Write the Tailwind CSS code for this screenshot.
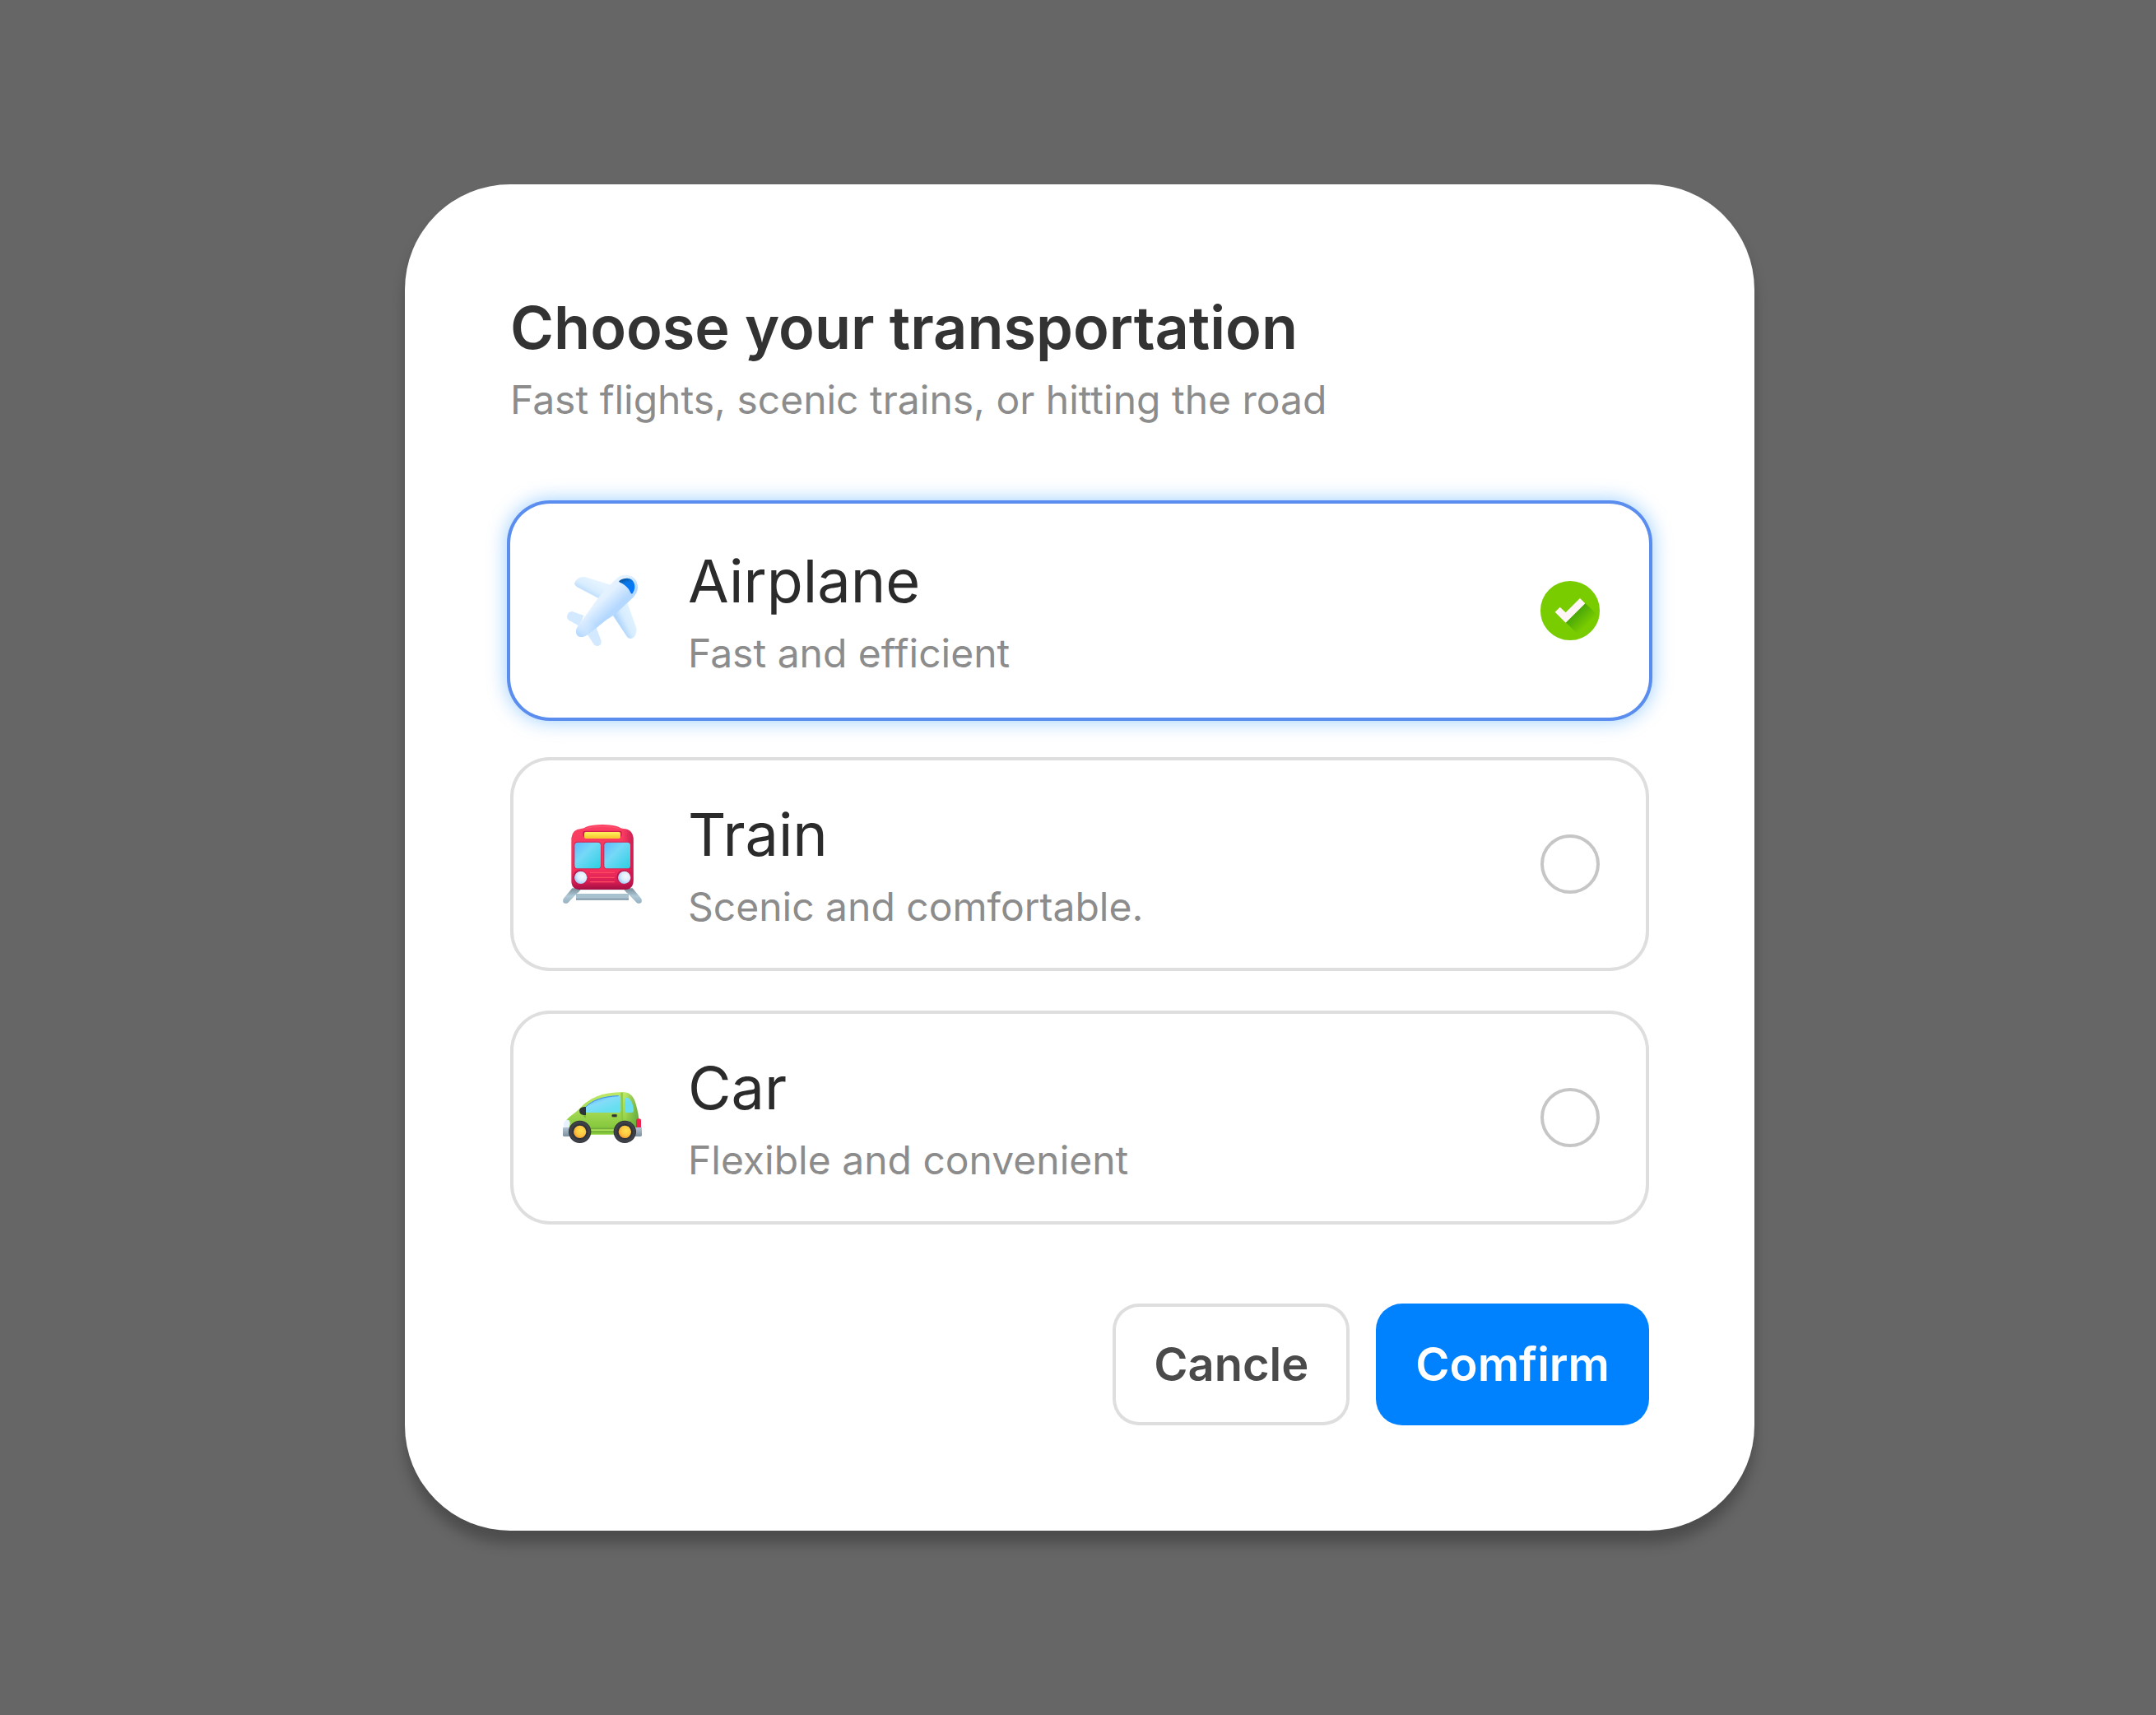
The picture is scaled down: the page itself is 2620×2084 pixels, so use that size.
<!DOCTYPE html>
<html lang="en">
<head>
    <meta charset="UTF-8">
    <meta name="viewport" content="width=device-width, initial-scale=1.0">
    <title>Choose your transportation</title>
    <script src="https://cdn.jsdelivr.net/npm/@tailwindcss/browser@4"></script>
</head>
<body class="flex min-h-screen items-center justify-center bg-[#666666] pl-1 font-['Inter',sans-serif] [font-optical-sizing:none]">
    <form class="w-full max-w-[1640px] rounded-[128px] bg-white p-32 shadow-[0_16px_16px_rgba(0,0,0,0.25)]">
        <header class="flex flex-col gap-3">
            <h1 id="form-title" class="text-[72px] leading-[92px] font-semibold text-[#333333]">Choose your transportation</h1>
            <p class="text-[48px] leading-[60px] text-[#8c8c8c]">Fast flights, scenic trains, or hitting the road</p>
        </header>

        <fieldset class="mt-24 flex flex-col gap-12" aria-labelledby="form-title">
            <!-- Airplane -->
            <label for="airplane" class="flex items-center gap-14 rounded-[48px] py-12 pr-15 pl-16 shadow-[0_0_0_4px_#5b8def,0_0_24px_4px_rgba(0,132,255,0.4)]">
                <svg class="size-24 shrink-0" viewBox="42 42 288 288" aria-hidden="true">
                    <defs>
                        <linearGradient id="plane-body" x1="145" y1="120" x2="215" y2="195" gradientUnits="userSpaceOnUse">
                            <stop offset="0" stop-color="#e6f4ff"/>
                            <stop offset="0.45" stop-color="#e3f1ff"/>
                            <stop offset="1" stop-color="#b4d8ff"/>
                        </linearGradient>
                        <linearGradient id="plane-tail" x1="95" y1="285" x2="150" y2="225" gradientUnits="userSpaceOnUse">
                            <stop offset="0" stop-color="#a9d2ff"/>
                            <stop offset="0.5" stop-color="#d6eaff" stop-opacity="0.5"/>
                            <stop offset="1" stop-color="#e3f1ff" stop-opacity="0"/>
                        </linearGradient>
                        <linearGradient id="plane-wing-l" x1="150" y1="75" x2="125" y2="120" gradientUnits="userSpaceOnUse">
                            <stop offset="0" stop-color="#e4f3ff"/>
                            <stop offset="0.55" stop-color="#d9edff"/>
                            <stop offset="1" stop-color="#bcdcfc"/>
                        </linearGradient>
                        <linearGradient id="plane-wing-r" x1="300" y1="205" x2="248" y2="230" gradientUnits="userSpaceOnUse">
                            <stop offset="0" stop-color="#e2f3ff"/>
                            <stop offset="0.6" stop-color="#d6ecff"/>
                            <stop offset="1" stop-color="#b3d7fb"/>
                        </linearGradient>
                        <linearGradient id="plane-window" x1="265" y1="68" x2="285" y2="120" gradientUnits="userSpaceOnUse">
                            <stop offset="0" stop-color="#07539f"/>
                            <stop offset="0.35" stop-color="#0a78e6"/>
                            <stop offset="1" stop-color="#0077ff"/>
                        </linearGradient>
                    </defs>
                    <path fill="url(#plane-wing-l)" d="M84 87C90 70 103 62 122 63L216 92L182 146L94 100Q84 94 84 87Z"/>
                    <path fill="url(#plane-wing-r)" d="M276 154L310 250C312 270 303 288 288 288Q281 288 276 281L224 203Z"/>
                    <path fill="#d3e9ff" d="M57 208Q60 189 76 189L118 204L102 242L64 221Q57 216 57 208Z"/>
                    <path fill="#d3e9ff" d="M164 248L182 297Q183 315 166 315Q159 315 155 309L131 272Z"/>
                    <path fill="url(#plane-body)" d="M237 70C258 50 295 53 308 75C320 97 316 120 299 137C270 164 235 200 205 217C175 239 150 263 129 275C110 288 90 282 90 262C90 245 108 229 121 209C145 178 166 142 193 113Z"/>
                    <path fill="url(#plane-tail)" d="M237 70C258 50 295 53 308 75C320 97 316 120 299 137C270 164 235 200 205 217C175 239 150 263 129 275C110 288 90 282 90 262C90 245 108 229 121 209C145 178 166 142 193 113Z"/>
                    <path fill="url(#plane-window)" d="M247 78C262 66 284 65 294 74C307 86 307 107 296 123Q292 127 289 121C282 104 268 90 250 83Q245 81 247 78Z"/>
                </svg>
                <span class="flex flex-1 flex-col gap-3">
                    <span class="text-[72px] leading-[92px] text-[#2b2b2b]">Airplane</span>
                    <span class="text-[48px] leading-[60px] text-[#8c8c8c]">Fast and efficient</span>
                </span>
                <span class="grid size-18 shrink-0">
                    <input type="radio" id="airplane" name="transport" value="airplane" checked class="peer col-start-1 row-start-1 size-18 appearance-none rounded-full border-4 border-[#c6c6c6] checked:border-[#78cc00] checked:bg-[#78cc00]">
                    <svg class="pointer-events-none invisible col-start-1 row-start-1 size-18 peer-checked:visible" viewBox="66 48 216 216" aria-hidden="true">
                        <defs>
                            <linearGradient id="check-shadow" x1="190" y1="155" x2="238" y2="205" gradientUnits="userSpaceOnUse">
                                <stop offset="0" stop-color="#42a009"/>
                                <stop offset="1" stop-color="#78cc00"/>
                            </linearGradient>
                        </defs>
                        <path fill="url(#check-shadow)" d="M228 128L270 168A108 108 0 0 1 206 245L158 199Z"/>
                        <path fill="#fff5f5" d="M119 161L137 143L158 163L210 111L229 130L158 200Z"/>
                    </svg>
                </span>
            </label>

            <!-- Train -->
            <label for="train" class="flex items-center gap-14 rounded-[48px] py-12 pr-15 pl-16 inset-ring-4 inset-ring-[#dedede]">
                <svg class="size-24 shrink-0" viewBox="42 36 288 288" aria-hidden="true">
                    <defs>
                        <linearGradient id="train-body" x1="186" y1="36" x2="186" y2="272" gradientUnits="userSpaceOnUse">
                            <stop offset="0" stop-color="#fb4063"/>
                            <stop offset="0.7" stop-color="#f4305c"/>
                            <stop offset="0.88" stop-color="#d91e54"/>
                            <stop offset="1" stop-color="#a30f43"/>
                        </linearGradient>
                        <linearGradient id="train-side" x1="260" y1="0" x2="299" y2="0" gradientUnits="userSpaceOnUse">
                            <stop offset="0" stop-color="#b30d48" stop-opacity="0"/>
                            <stop offset="1" stop-color="#b30d48" stop-opacity="0.65"/>
                        </linearGradient>
                        <linearGradient id="train-glass" x1="0" y1="0" x2="1" y2="1">
                            <stop offset="0" stop-color="#62b8fd"/>
                            <stop offset="0.4" stop-color="#75d9f7"/>
                            <stop offset="1" stop-color="#2bd0e2"/>
                        </linearGradient>
                        <linearGradient id="train-sign" x1="0" y1="0" x2="0" y2="1">
                            <stop offset="0" stop-color="#fff05f"/>
                            <stop offset="1" stop-color="#f6c52b"/>
                        </linearGradient>
                        <radialGradient id="train-lamp" cx="0.62" cy="0.4" r="0.6">
                            <stop offset="0" stop-color="#f4faff"/>
                            <stop offset="0.6" stop-color="#dcecff"/>
                            <stop offset="1" stop-color="#a9cdf5"/>
                        </radialGradient>
                        <linearGradient id="train-rail" x1="0" y1="270" x2="0" y2="324" gradientUnits="userSpaceOnUse">
                            <stop offset="0" stop-color="#7d929f"/>
                            <stop offset="0.5" stop-color="#b0cad7"/>
                            <stop offset="1" stop-color="#97afc0"/>
                        </linearGradient>
                    </defs>
                    <path fill="#93aab7" d="M96 270H276V289H96Z"/>
                    <path fill="#a9c2cf" d="M90 288H282V309H90Z"/>
                    <path fill="#8299aa" d="M90 305H282V311H90Z"/>
                    <path fill="#ffffff" d="M106 274H266L278 288H94Z"/>
                    <path fill="url(#train-rail)" d="M76 268H112L60 322Q52 326 44 320Q40 312 46 304Z"/>
                    <path fill="url(#train-rail)" d="M296 268H260L312 322Q320 326 328 320Q332 312 326 304Z"/>
                    <path fill="url(#train-body)" d="M109 51Q120 49 127 44Q150 36 186 36Q222 36 245 44Q252 49 263 51Q299 53 299 91V240Q299 273 268 273H104Q73 273 73 240V91Q73 53 109 51Z"/>
                    <path fill="url(#train-side)" d="M255 50L263 51Q299 53 299 91V240Q299 273 268 273H255Z"/>
                    <path fill="none" stroke="#ff5670" stroke-width="3" d="M124 50Q150 43 186 43Q222 43 248 50"/>
                    <rect x="115" y="59" width="142" height="22" rx="6" fill="#cf1d4d"/>
                    <rect x="120" y="63" width="132" height="24" rx="6" fill="url(#train-sign)"/>
                    <rect x="82" y="98" width="100" height="101" rx="13" fill="#cf2251"/>
                    <rect x="190" y="98" width="100" height="101" rx="13" fill="#d5234f"/>
                    <rect x="85" y="101" width="95" height="95" rx="11" fill="url(#train-glass)"/>
                    <rect x="193" y="101" width="95" height="95" rx="11" fill="url(#train-glass)"/>
                    <path stroke="#ff4a61" stroke-width="4" stroke-linecap="round" d="M142 211H229M142 229H229M142 245H229"/>
                    <circle cx="104" cy="227" r="25" fill="#b8194a"/>
                    <circle cx="263" cy="227" r="25" fill="#b8194a"/>
                    <circle cx="107" cy="229" r="23" fill="url(#train-lamp)"/>
                    <circle cx="266" cy="229" r="23" fill="url(#train-lamp)"/>
                </svg>
                <span class="flex flex-1 flex-col gap-3">
                    <span class="text-[72px] leading-[92px] text-[#2b2b2b]">Train</span>
                    <span class="text-[48px] leading-[60px] text-[#8c8c8c]">Scenic and comfortable.</span>
                </span>
                <input type="radio" id="train" name="transport" value="train" class="size-18 shrink-0 appearance-none rounded-full border-4 border-[#c6c6c6] checked:bg-[#78cc00]">
            </label>

            <!-- Car -->
            <label for="car" class="flex items-center gap-14 rounded-[48px] py-12 pr-15 pl-16 inset-ring-4 inset-ring-[#dedede]">
                <svg class="size-24 shrink-0" viewBox="42 30 288 288" aria-hidden="true">
                    <defs>
                        <linearGradient id="car-body" x1="190" y1="80" x2="190" y2="236" gradientUnits="userSpaceOnUse">
                            <stop offset="0" stop-color="#bfe968"/>
                            <stop offset="0.45" stop-color="#a5da53"/>
                            <stop offset="0.82" stop-color="#86c83e"/>
                            <stop offset="0.88" stop-color="#6aa337"/>
                            <stop offset="1" stop-color="#8cd13b"/>
                        </linearGradient>
                        <linearGradient id="car-back" x1="270" y1="0" x2="322" y2="0" gradientUnits="userSpaceOnUse">
                            <stop offset="0" stop-color="#4f9a3a" stop-opacity="0"/>
                            <stop offset="1" stop-color="#4f9a3a" stop-opacity="0.75"/>
                        </linearGradient>
                        <linearGradient id="car-glass" x1="160" y1="100" x2="180" y2="156" gradientUnits="userSpaceOnUse">
                            <stop offset="0" stop-color="#62b4f5"/>
                            <stop offset="0.4" stop-color="#84dcf9"/>
                            <stop offset="1" stop-color="#68dff1"/>
                        </linearGradient>
                        <linearGradient id="car-bumper" x1="0" y1="0" x2="0" y2="1">
                            <stop offset="0" stop-color="#b4c4d2"/>
                            <stop offset="1" stop-color="#7d8f9e"/>
                        </linearGradient>
                        <radialGradient id="car-tyre">
                            <stop offset="0.6" stop-color="#2c2f36"/>
                            <stop offset="0.85" stop-color="#42464c"/>
                            <stop offset="1" stop-color="#2b2d31"/>
                        </radialGradient>
                        <radialGradient id="car-hub" cx="0.6" cy="0.4" r="0.65">
                            <stop offset="0" stop-color="#ffe052"/>
                            <stop offset="0.6" stop-color="#fdc63f"/>
                            <stop offset="1" stop-color="#f29b35"/>
                        </radialGradient>
                    </defs>
                    <path fill="url(#car-body)" d="M54 184C68 167 87 158 104 140C140 103 180 82 262 81C287 82 300 98 307 122C314 146 318 165 320 190V236H60Z"/>
                    <path fill="url(#car-back)" d="M262 81C287 82 300 98 307 122C314 146 318 165 320 190V236H262Z"/>
                    <path fill="#b3e75c" d="M144 217H230V222H144Z"/>
                    <path fill="#8ecb45" d="M253 83H258V186H253Z"/>
                    <path fill="#82c13d" d="M258 83H260V186H258Z"/>
                    <path fill="url(#car-glass)" d="M122 156V138C146 112 185 95 245 94Q253 95 253 104V148Q253 156 244 156Z"/>
                    <path fill="none" stroke="#3d91e6" stroke-width="3" d="M125 136C147 113 185 97 245 95"/>
                    <path fill="url(#car-glass)" d="M267 108Q268 101 276 101C292 105 299 130 300 149Q299 156 292 156H275Q267 155 267 147Z"/>
                    <path fill="#7ab238" d="M112 160L126 164L124 177Z"/>
                    <path fill="#2f343b" d="M126 135V165H119C108 164 102 158 102 149C103 140 110 135 126 135Z"/>
                    <rect x="219" y="161" width="22" height="13" rx="6" fill="#7ba03a"/>
                    <rect x="221" y="163" width="18" height="8" rx="4" fill="#2f343b"/>
                    <path fill="#e8f1ff" d="M45 211V197Q47 183 59 182Q69 184 68 196L65 211Z"/>
                    <path fill="#f0224f" d="M309 212V184Q311 178 318 178Q327 178 327 184V212Z"/>
                    <path fill="url(#car-bumper)" d="M45 210H75V243H46Q42 243 42 238V213Q42 210 45 210Z"/>
                    <path fill="url(#car-bumper)" d="M300 210H328Q330 210 330 213V238Q330 243 325 243H300Z"/>
                    <circle cx="104" cy="226" r="41" fill="url(#car-tyre)"/>
                    <circle cx="268" cy="226" r="41" fill="url(#car-tyre)"/>
                    <circle cx="104" cy="226" r="23" fill="url(#car-hub)"/>
                    <circle cx="268" cy="226" r="23" fill="url(#car-hub)"/>
                </svg>
                <span class="flex flex-1 flex-col gap-3">
                    <span class="text-[72px] leading-[92px] text-[#2b2b2b]">Car</span>
                    <span class="text-[48px] leading-[60px] text-[#8c8c8c]">Flexible and convenient</span>
                </span>
                <input type="radio" id="car" name="transport" value="car" class="size-18 shrink-0 appearance-none rounded-full border-4 border-[#c6c6c6] checked:bg-[#78cc00]">
            </label>
        </fieldset>

        <div class="mt-24 flex justify-end gap-8">
            <button type="button" class="min-w-72 rounded-[32px] py-10 text-[56px] leading-[68px] font-semibold text-[#4a4a4a] inset-ring-4 inset-ring-[#dedede]">Cancle</button>
            <button type="submit" class="rounded-[32px] bg-[#0082ff] px-12 py-10 text-[56px] leading-[68px] font-semibold text-white">Comfirm</button>
        </div>
    </form>
</body>
</html>
